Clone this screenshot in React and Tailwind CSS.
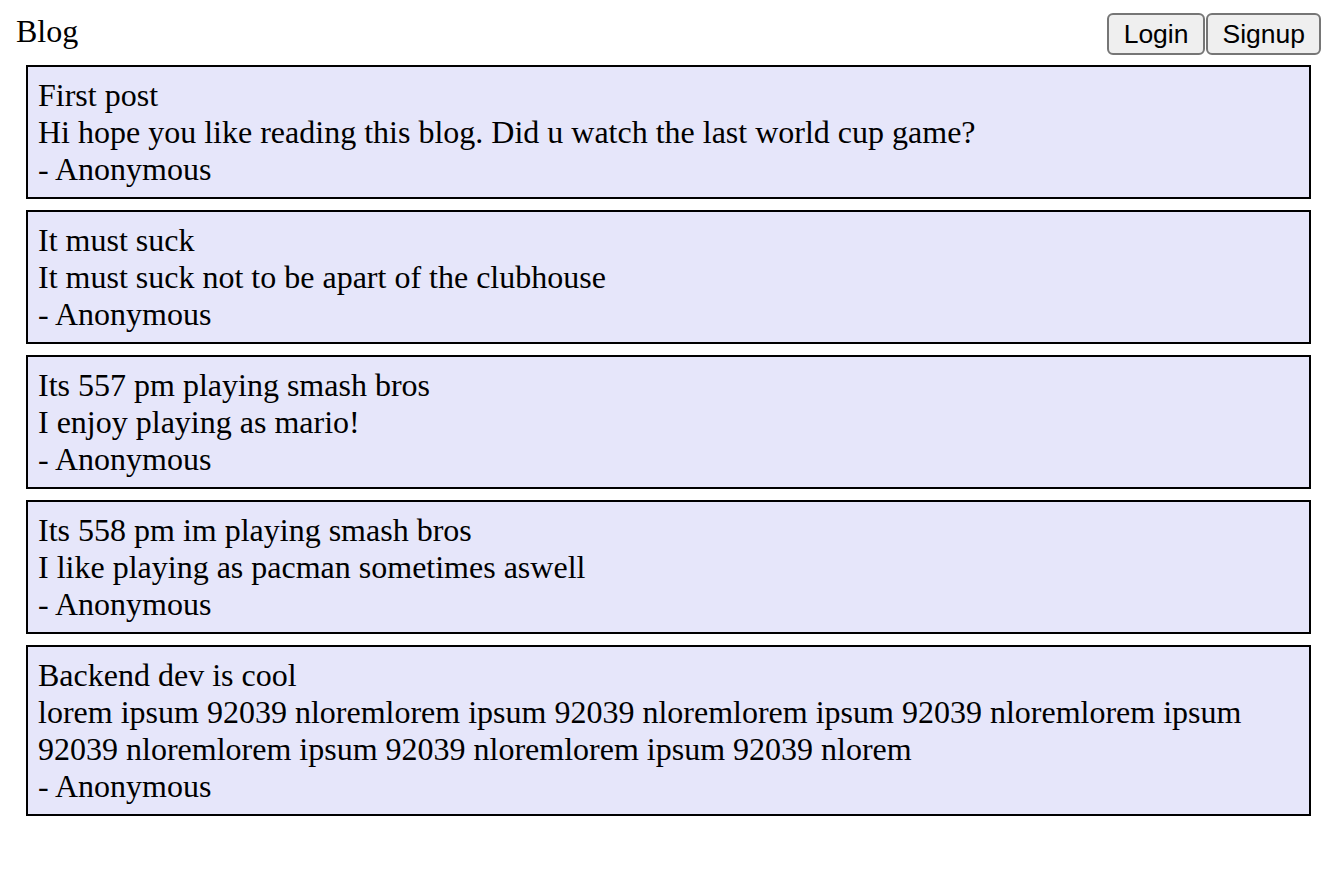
import React from "react";

const posts = [
  {
    title: "First post",
    text: "Hi hope you like reading this blog. Did u watch the last world cup game?",
    author: "Anonymous",
  },
  {
    title: "It must suck",
    text: "It must suck not to be apart of the clubhouse",
    author: "Anonymous",
  },
  {
    title: "Its 557 pm playing smash bros",
    text: "I enjoy playing as mario!",
    author: "Anonymous",
  },
  {
    title: "Its 558 pm im playing smash bros",
    text: "I like playing as pacman sometimes aswell",
    author: "Anonymous",
  },
  {
    title: "Backend dev is cool",
    text: "lorem ipsum 92039 nloremlorem ipsum 92039 nloremlorem ipsum 92039 nloremlorem ipsum 92039 nloremlorem ipsum 92039 nloremlorem ipsum 92039 nlorem",
    author: "Anonymous",
  },
];

function App() {
  return (
    <div className="min-h-screen bg-white text-black font-['Liberation_Serif','Times_New_Roman',serif] text-[32px] leading-[37px]">
      <div className="flex justify-between items-start pt-[13px] pl-4 pr-[3px]">
        <div>Blog</div>
        <div className="flex gap-px">
          <button className="h-[42px] px-[15px] bg-[#efefef] border-2 border-[#767676] rounded-[6px] font-['Liberation_Sans',Arial,sans-serif] text-[26.5px] leading-none text-black">
            Login
          </button>
          <button className="h-[42px] px-[14px] bg-[#efefef] border-2 border-[#767676] rounded-[6px] font-['Liberation_Sans',Arial,sans-serif] text-[26.5px] leading-none text-black">
            Signup
          </button>
        </div>
      </div>
      <div className="flex flex-col gap-[11px] mt-[10px] ml-[26px] mr-[13px]">
        {posts.map((post, index) => {
          return (
            <div
              className="bg-[#e6e6fa] border-2 border-black pl-[10px] pr-[10px] pt-[10px] pb-[9px]"
              key={index}
            >
              <div>{post.title}</div>
              <div>{post.text}</div>
              <div>- {post.author}</div>
            </div>
          );
        })}
      </div>
    </div>
  );
}

export default App;
